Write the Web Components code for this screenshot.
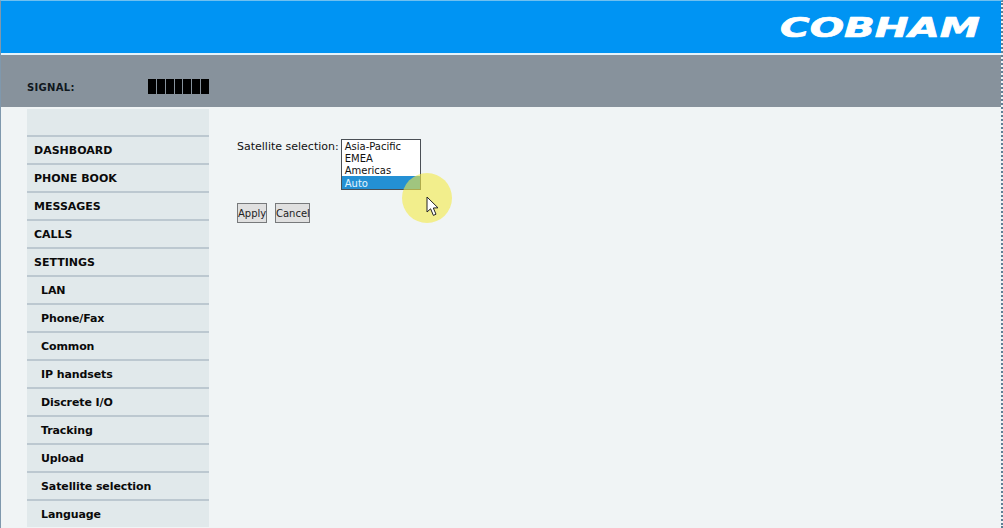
<!DOCTYPE html>
<html>
<head>
<meta charset="utf-8">
<title>Satellite selection</title>
<style>
html, body { margin: 0; height: 528px; overflow: hidden; background: #f0f4f5; }
</style>
</head>
<body>
<app-shell>
  <top-banner></top-banner>
  <signal-bar></signal-bar>
  <div slot="main" style="display:flex;align-items:flex-start">
    <side-menu></side-menu>
    <satellite-form></satellite-form>
  </div>
</app-shell>

<script>
class AppShell extends HTMLElement {
  constructor() {
    super();
    this.attachShadow({ mode: 'open' }).innerHTML = `
    <style>
      :host { display: block; height: 528px; overflow: hidden; box-sizing: border-box;
        border-left: 1px solid #7f98ad; border-right: 2px dotted #5f7f95; border-top: 1px solid #6fc0f0;
        font-family: "DejaVu Sans", Verdana, sans-serif; }
    </style>
    <slot></slot>
    <slot name="main"></slot>`;
  }
}

class TopBanner extends HTMLElement {
  constructor() {
    super();
    this.attachShadow({ mode: 'open' }).innerHTML = `
    <style>
      :host { display: flex; justify-content: flex-end; align-items: center; height: 52px; background: #0094f3;
        border-bottom: 2px solid #e4f3fb; padding-right: 18px; }
      svg { display: block; }
      text { font: italic 700 27px "DejaVu Sans", sans-serif; fill: #fff; stroke: #fff; stroke-width: .7px; stroke-linejoin: round; }
    </style>
    <svg width="204" height="30" viewBox="0 0 204 30">
      <text x="1" y="24.5" textLength="200" lengthAdjust="spacingAndGlyphs">COBHAM</text>
    </svg>`;
  }
}

class SignalBar extends HTMLElement {
  constructor() {
    super();
    const bars = '<i></i>'.repeat(7);
    this.attachShadow({ mode: 'open' }).innerHTML = `
    <style>
      :host { display: flex; align-items: flex-end; background: #87929c; padding-left: 26px; box-sizing: border-box; padding-bottom: 13px; border-bottom: 2px solid #f0f4f5; height: 54px; }
      .label { font-size: 10px; font-weight: 700; letter-spacing: .3px; color: #10181e; width: 121px; line-height: 14px; margin-bottom: -1px; }
      .bars { display: flex; gap: 1px; width: 61px; }
      i { display: block; flex: 1; height: 15px; background: #000; }
    </style>
    <span class="label">SIGNAL:</span>
    <span class="bars">${bars}</span>`;
  }
}

class MenuItem extends HTMLElement {
  constructor() {
    super();
    this.attachShadow({ mode: 'open' }).innerHTML = `
    <style>
      :host { display: block; height: 26px; border-top: 2px solid #bcc8d0; font-size: 11px; font-weight: 700; color: #0a0a0a;
        line-height: 28px; padding-left: 7px; white-space: nowrap; }
      :host([sub]) { padding-left: 14px; letter-spacing: -.1px; }
    </style>
    <slot></slot>`;
  }
}

class SideMenu extends HTMLElement {
  constructor() {
    super();
    const top = ['DASHBOARD', 'PHONE BOOK', 'MESSAGES', 'CALLS', 'SETTINGS'];
    const sub = ['LAN', 'Phone/Fax', 'Common', 'IP handsets', 'Discrete I/O', 'Tracking', 'Upload', 'Satellite selection', 'Language'];
    const rows = top.map(t => `<menu-item>${t}</menu-item>`).join('') +
      sub.map(t => `<menu-item sub>${t}</menu-item>`).join('');
    this.attachShadow({ mode: 'open' }).innerHTML = `
    <style>
      :host { display: block; width: 182px; margin-left: 26px; background: #e1e9eb; flex: none; padding-top: 26px; }
    </style>
    ${rows}`;
  }
}

class SatelliteList extends HTMLElement {
  constructor() {
    super();
    const opts = ['Asia-Pacific', 'EMEA', 'Americas', 'Auto'];
    this.attachShadow({ mode: 'open' }).innerHTML = `
    <style>
      :host { display: block; width: 78px; border: 1px solid #4a4f55; background: #fff; font-size: 10px; color: #111; padding-top: 1px; }
      div { height: 12px; line-height: 12px; padding-left: 3px; white-space: nowrap; }
      div.sel { background: #2490d4; color: #e4f6ff; height: 13px; margin-top: -1px; line-height: 16px; }
    </style>
    ${opts.map(o => `<div class="${o === 'Auto' ? 'sel' : ''}">${o}</div>`).join('')}`;
  }
}

class FormButton extends HTMLElement {
  constructor() {
    super();
    this.attachShadow({ mode: 'open' }).innerHTML = `
    <style>
      :host { display: block; box-sizing: border-box; height: 20px; border: 1px solid #77797b; background: #e0e0e0; color: #222;
        font-size: 10px; line-height: 20px; text-align: center; }
    </style>
    <slot></slot>`;
  }
}

class SatelliteForm extends HTMLElement {
  constructor() {
    super();
    this.attachShadow({ mode: 'open' }).innerHTML = `
    <style>
      :host { display: block; position: relative; padding: 30px 0 0 28px; font-size: 11px; color: #111; }
      .row { display: flex; align-items: flex-start; gap: 2px; }
      .lbl { line-height: 16px; white-space: nowrap; }
      .btns { display: flex; gap: 8px; margin-top: 13px; }
      .halo { position: absolute; left: 193px; top: 64px; width: 50px; height: 50px; border-radius: 50%; background: rgba(244, 234, 70, .6); pointer-events: none; }
      svg { position: absolute; left: 217px; top: 87px; }
    </style>
    <div class="row">
      <span class="lbl">Satellite selection:</span>
      <satellite-list></satellite-list>
    </div>
    <div class="btns">
      <form-button style="width:30px">Apply</form-button>
      <form-button style="width:35px">Cancel</form-button>
    </div>
    <div class="halo"></div>
    <svg width="15" height="21" viewBox="0 0 15 21">
      <path d="M1 1 V16 L4.6 12.8 L7.4 19.4 L10 18.2 L7.3 12 L12 11.8 Z" fill="#fff" stroke="#222" stroke-width="1" stroke-linejoin="round"/>
    </svg>`;
  }
}

customElements.define('app-shell', AppShell);
customElements.define('top-banner', TopBanner);
customElements.define('signal-bar', SignalBar);
customElements.define('menu-item', MenuItem);
customElements.define('side-menu', SideMenu);
customElements.define('satellite-list', SatelliteList);
customElements.define('form-button', FormButton);
customElements.define('satellite-form', SatelliteForm);
</script>
</body>
</html>
